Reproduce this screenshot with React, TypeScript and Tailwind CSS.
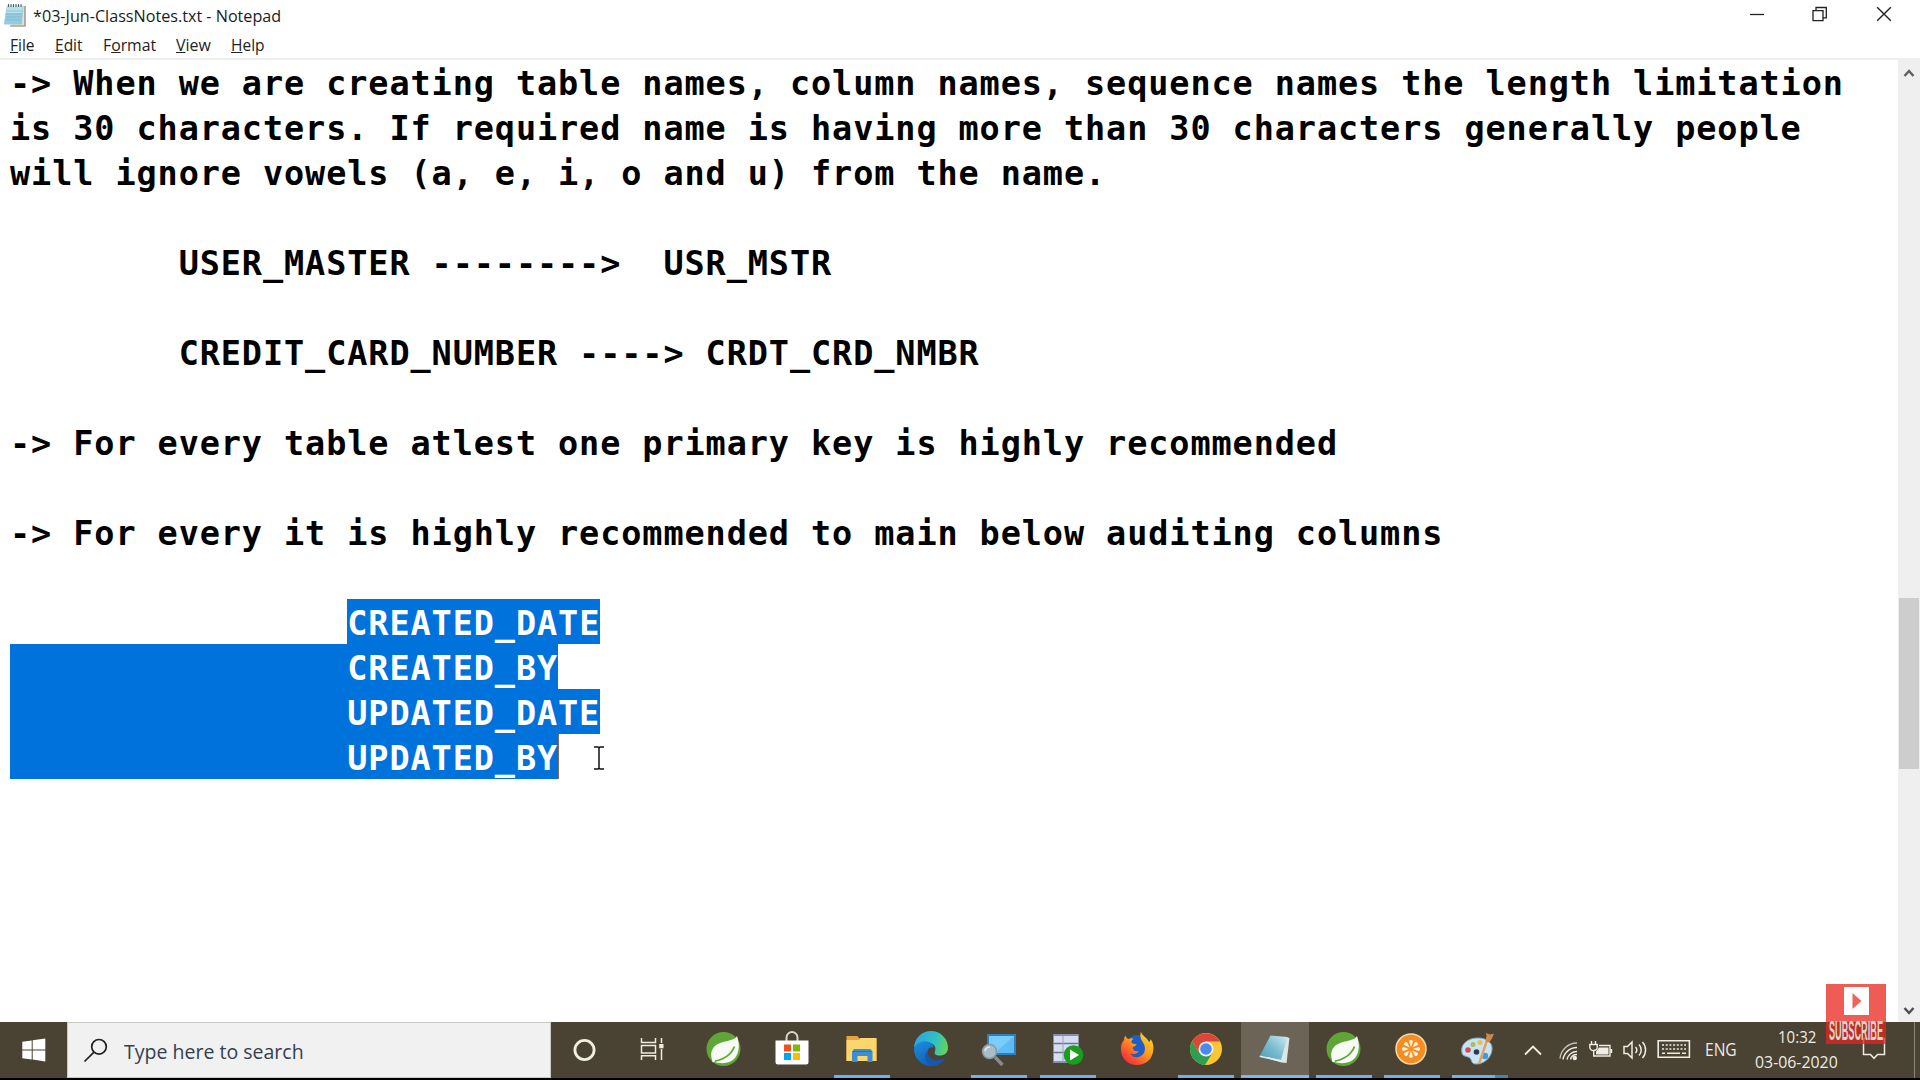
import { useLayoutEffect, useRef, useState } from "react";
import type { ReactNode } from "react";

/* Text squeezed or stretched to a given width. */
function Fit({ w, className = "", children }: { w: number; className?: string; children: ReactNode }) {
  const ref = useRef<HTMLSpanElement>(null);
  const [scale, setScale] = useState(1);
  useLayoutEffect(() => {
    if (ref.current) setScale(w / ref.current.offsetWidth);
  }, [w]);
  return (
    <span className="block shrink-0" style={{ width: w }}>
      <span
        ref={ref}
        className={"inline-block origin-left whitespace-pre " + className}
        style={{ transform: `scaleX(${scale})` }}
      >
        {children}
      </span>
    </span>
  );
}

function NotepadIcon({ className }: { className: string }) {
  return (
    <svg className={className} viewBox="0 0 24 24">
      <path d="M6 3h16.500v20.500H8z" fill="#e9e2cf" />
      <path d="M22 3v20H7" fill="none" stroke="#8a8473" strokeWidth="1.200" />
      <path d="M4 2.500h16.500L19 21.500H0.800z" fill="#93cbdf" />
      <path d="M4.500 3h15.500l-1 7H3z" fill="#b9dfeb" />
      <path d="M3 8h16M2.500 11h16M2.500 14h16M2 17h16" stroke="#79b3cb" strokeWidth=".6" />
      <path d="M5.500 1v3M8 1v3M10.500 1v3M13 1v3M15.500 1v3M18 1v3" stroke="#4c5f66" strokeWidth="1" />
    </svg>
  );
}

function TitleBar() {
  return (
    <div className="flex h-8 shrink-0 items-start bg-white">
      <NotepadIcon className="ml-[3px] mt-[3px] h-6 w-6" />
      <div className="ml-[6px] mt-[5px] text-[15.500px] leading-[22px] text-[#1c1c1c]">
        <Fit w={248}>*03-Jun-ClassNotes.txt - Notepad</Fit>
      </div>
      <div className="ml-auto flex text-[#222]">
        <svg className="mt-[6px] h-[16px] w-[16px]" viewBox="0 0 16 16"><path d="M1 8.500h14" stroke="currentColor" strokeWidth="1.300" /></svg>
        <svg className="ml-[47px] mt-[6px] h-[16px] w-[16px]" viewBox="0 0 16 16" fill="none" stroke="currentColor" strokeWidth="1.300">
          <path d="M1 4.600h10v10H1zM4 4.600V1.500h10.300v10.300H11" />
        </svg>
        <svg className="ml-[48px] mr-[28px] mt-[6px] h-[16px] w-[16px]" viewBox="0 0 16 16" stroke="currentColor" strokeWidth="1.400"><path d="M1.200 1.200l13.600 13.600M14.800 1.200L1.200 14.800" /></svg>
      </div>
    </div>
  );
}

function MenuBar() {
  return (
    <div className="flex h-[26px] shrink-0 bg-white pl-[10px] text-[15.500px] leading-[27px] text-[#222]">
      <Fit w={25}><u>F</u>ile</Fit>
      <div className="w-[20px]" />
      <Fit w={28}><u>E</u>dit</Fit>
      <div className="w-[20px]" />
      <Fit w={53}>F<u>o</u>rmat</Fit>
      <div className="w-[20px]" />
      <Fit w={35}><u>V</u>iew</Fit>
      <div className="w-[20px]" />
      <Fit w={34}><u>H</u>elp</Fit>
    </div>
  );
}

const LINES = [
  "-> When we are creating table names, column names, sequence names the length limitation",
  "is 30 characters. If required name is having more than 30 characters generally people",
  "will ignore vowels (a, e, i, o and u) from the name.",
  "",
  "        USER_MASTER -------->  USR_MSTR",
  "",
  "        CREDIT_CARD_NUMBER ----> CRDT_CRD_NMBR",
  "",
  "-> For every table atlest one primary key is highly recommended",
  "",
  "-> For every it is highly recommended to main below auditing columns",
  "",
];

const SELECTED = [
  { plain: "                ", text: "CREATED_DATE" },
  { plain: "", text: "                CREATED_BY" },
  { plain: "", text: "                UPDATED_DATE" },
  { plain: "", text: "                UPDATED_BY" },
];

function Editor() {
  return (
    <div className="flex min-h-0 flex-1 border-t-2 border-[#efefef] bg-white">
      <div className="relative flex-1 overflow-hidden pl-[10px] font-['DejaVu_Sans_Mono','Liberation_Mono',monospace] text-[33.500px] font-bold tracking-[0.910px] text-black">
        <div className="-mt-px">
          {LINES.map((l, i) => (
            <div key={i} className="h-[45px] whitespace-pre pt-[2px] leading-[45px]">{l}</div>
          ))}
          {SELECTED.map((l) => (
            <div key={l.text} className="flex h-[45px] whitespace-pre leading-[47px]">
              <span>{l.plain}</span>
              <span className="h-[45px] bg-[#0072dc] pt-px text-white">{l.text}</span>
            </div>
          ))}
        </div>
        <svg className="absolute left-[593px] top-[685px] h-[26px] w-[12px]" viewBox="0 0 12 26" fill="none" stroke="#111" strokeWidth="1.500">
          <path d="M1 2h4l1 1 1-1h4M6 3v20M1 24h4l1-1 1 1h4" />
        </svg>
        <div className="absolute left-[558px] top-[674px] h-[45px] w-px bg-[#8a6a50]" />
      </div>
      <div className="flex w-[22px] flex-col items-center bg-[#efefef]">
        <svg className="mt-[7px] h-[12px] w-[12px]" viewBox="0 0 12 12" fill="none" stroke="#606060" strokeWidth="2.500"><path d="M1.500 9L6 4l4.500 5" /></svg>
        <div className="mt-[519px] h-[171px] w-[20px] bg-[#cdcdcd]" />
        <svg className="mb-[5px] mt-auto h-[12px] w-[12px]" viewBox="0 0 12 12" fill="none" stroke="#505050" strokeWidth="2.500"><path d="M1.500 3L6 8l4.500-5" /></svg>
      </div>
    </div>
  );
}

function Spring() {
  return (
    <svg className="h-[36px] w-[36px]" viewBox="0 0 36 36">
      <circle cx="17.500" cy="18" r="17" fill="#5fa636" />
      <path d="M31 5C28 11 14 9 8 16c-4 5-3 10-1.500 14C14 33.500 24 33 29 27c5-6 4.500-15 2-22z" fill="#f7fbf4" />
      <path d="M6.500 30.500C17 29 25 24 28.500 15.500" fill="none" stroke="#5fa636" strokeWidth="1.800" />
      <circle cx="7.500" cy="29.500" r="1.500" fill="#fff" />
    </svg>
  );
}

function Store() {
  return (
    <svg className="h-[36px] w-[36px]" viewBox="0 0 36 36">
      <path d="M12.500 10V6.500a5.500 5.500 0 0111 0V10" fill="none" stroke="#d8d6cc" strokeWidth="2" />
      <path d="M1.500 9.500h33V31a2.500 2.500 0 01-2.500 2.500H4A2.500 2.500 0 011.500 31z" fill="#fff" />
      <path d="M10 13.500h7v7h-7z" fill="#f25022" />
      <path d="M19 13.500h7v7h-7z" fill="#7fba00" />
      <path d="M10 22h7v7h-7z" fill="#00a4ef" />
      <path d="M19 22h7v7h-7z" fill="#ffb900" />
    </svg>
  );
}

function Explorer() {
  return (
    <svg className="h-[36px] w-[36px]" viewBox="0 0 36 36">
      <path d="M2.500 5h11l2 2.500h17V30h-30z" fill="#e8a33b" />
      <path d="M2.500 9h12l2-2h16v23h-30z" fill="#fbd56e" />
      <path d="M8 31V20.500L10 18h16.500l2 2.500V31h-5v-6h-10v6z" fill="#3e8ed0" />
      <path d="M9 20.500h18.500" stroke="#2d6fae" strokeWidth="1" />
    </svg>
  );
}

function Edge() {
  return (
    <svg className="h-[36px] w-[36px]" viewBox="0 0 36 36">
      <defs>
        <linearGradient id="edgeTop" x1="0" x2="1" y1=".3" y2=".5"><stop offset="0" stopColor="#2aa5dc" /><stop offset=".6" stopColor="#2fc0c8" /><stop offset="1" stopColor="#62d35c" /></linearGradient>
        <linearGradient id="edgeLow" x1="0" x2=".6" y1="0" y2="1"><stop offset="0" stopColor="#1d8fdd" /><stop offset="1" stopColor="#0f5cb5" /></linearGradient>
      </defs>
      <path d="M1 17A17 17 0 0135 17c0 5-4 7.500-8 7.500-5 0-6-2-5-4 2-6-3-9-8-9C7 11.500 2 15 1 17z" fill="url(#edgeTop)" />
      <path d="M1 18C3 12 9 9.500 14 10.500c5 .8 7 4.500 6.500 6.500-1.500-1.500-5-1-6 3-1 5 4 9.500 10 9.500 3 0 5.500-1 7.500-2.500C29 32 24 35 18 35A17 17 0 011 18z" fill="url(#edgeLow)" />
      <path d="M14.500 20c-1 5 4 9.500 10 9.500 3 0 5.500-1 7.500-2.500-2 4-6 7-11 8-7-1-12-9-6.500-15z" fill="#1659ac" />
    </svg>
  );
}

function RemoteScreen() {
  return (
    <svg className="h-[36px] w-[36px]" viewBox="0 0 36 36">
      <path d="M6 3h29v21H6z" fill="#2f7fb8" />
      <path d="M8 5h25v17H8z" fill="#5dbcf8" />
      <path d="M8 5h25L14 22H8z" fill="#7accfb" />
      <path d="M14 26l7.500 8" stroke="#8a8a86" strokeWidth="3.500" />
      <circle cx="8.500" cy="20.500" r="7" fill="#a9bdc9" stroke="#8d979c" strokeWidth="1.500" />
      <path d="M4 20a5 5 0 015-4" fill="none" stroke="#dfe9ee" strokeWidth="1.500" />
    </svg>
  );
}

function ServerRun() {
  return (
    <svg className="h-[36px] w-[36px]" viewBox="0 0 36 36">
      <path d="M3.500 3h25v29h-25z" fill="#d6dcf2" />
      <path d="M3.500 4h25M3.500 12.500h25M3.500 21.500h25M3.500 31h25" stroke="#6f7390" strokeWidth="1.500" />
      <path d="M13 5v26" stroke="#9ba1c4" strokeWidth="1" />
      <circle cx="23.500" cy="24" r="9.800" fill="#18a01c" />
      <path d="M20 18.500l9 5.500-9 5.500z" fill="#fff" />
    </svg>
  );
}

function Firefox() {
  return (
    <svg className="h-[36px] w-[36px]" viewBox="0 0 36 36">
      <defs>
        <linearGradient id="fox" x1=".9" x2=".1" y1="0" y2="1"><stop offset="0" stopColor="#ffe226" /><stop offset=".45" stopColor="#ff9a1f" /><stop offset=".8" stopColor="#fb4434" /><stop offset="1" stopColor="#e82650" /></linearGradient>
      </defs>
      <circle cx="18" cy="15" r="11" fill="#1d5fc4" />
      <path d="M22 1c1 4 6 5 8 10 1.500-1 1.500-2 1.500-3 3 4 3.500 8 2.500 13-1.500 8-8 13-16 13C9 34 3 28 2 20c-.5-5 .5-8 3-11 0-1.500.3-3 1.500-4.500.5 2 1.500 3 3 3.500 2-1 4-1 5 0-1.500.8-2.500 2-2 3.500.5 1 3 1.500 5 1.500-.2 2-2.500 2.500-4 3.500.5 3 3 4.500 6.500 3.500-3 4-7 3.500-9 2 2 4 6 5 10 3.500 6-2.500 6-10 3-14-2-3-3.500-6-2-11z" fill="url(#fox)" />
    </svg>
  );
}

function Chrome() {
  return (
    <svg className="h-[36px] w-[36px]" viewBox="0 0 36 36">
      <circle cx="18" cy="18" r="16" fill="#fbc634" />
      <path d="M4.140 10A16 16 0 0017 34l7.500-12L18 18 11 21.500z" fill="#2f9e52" />
      <path d="M4.140 10A16 16 0 0131.860 10.500H18l-7 11z" fill="#dc4638" />
      <circle cx="18" cy="18" r="7.500" fill="#f2efe8" />
      <circle cx="18" cy="18" r="5.800" fill="#4a8af0" />
    </svg>
  );
}

function Citrus() {
  return (
    <svg className="h-[36px] w-[36px]" viewBox="0 0 36 36">
      <circle cx="17" cy="18" r="15" fill="#f68d22" stroke="#fbd9a8" strokeWidth="1.500" />
      <g fill="#fff3df">
        {[0, 45, 90, 135, 180, 225, 270, 315].map((a) => (
          <path key={a} d="M17 16l-2-5.500a2.100 2.100 0 014 0z" transform={`rotate(${a} 17 18)`} />
        ))}
      </g>
    </svg>
  );
}

function Palette() {
  return (
    <svg className="-ml-[6px] h-[36px] w-[36px]" viewBox="0 0 36 36">
      <path d="M3 22C1 13 9 7 19 7c9 0 15 5 14 12-1 8-8 14-16 14-5 0-4-4-6-6-2.500-2-7-1-8-5z" fill="#c9e3f1" stroke="#78afcf" strokeWidth="1" />
      <circle cx="9" cy="19" r="2.800" fill="#d9485a" />
      <circle cx="14" cy="13.500" r="2.500" fill="#a8bf58" />
      <circle cx="21" cy="11.500" r="2.500" fill="#e8c04a" />
      <circle cx="17.500" cy="21" r="2.800" fill="#2b3a4c" />
      <circle cx="26" cy="25" r="3.200" fill="#3f9bdc" />
      <path d="M28.500 8L20 33" stroke="#dba468" strokeWidth="2.500" />
      <path d="M26.500 10.500L27.500 5l-.5-3 4 1.500 4-1-2 5-3 4z" fill="#c98a52" />
    </svg>
  );
}

function TaskButton({ gap, bar = "on", children }: { gap: string; bar?: "on" | "off" | "group"; children: ReactNode }) {
  return (
    <div className={"flex h-full w-[56px] shrink-0 flex-col items-center " + gap}>
      <div className="mt-[9px] h-[36px]">{children}</div>
      {bar !== "off" && (
        <div className="mt-auto flex h-[3px] w-full">
          <div className="flex-1 bg-[#6fb0ee]" />
          {bar === "group" && <div className="w-[13px] bg-[#4b81b4]" />}
        </div>
      )}
    </div>
  );
}

function Tray() {
  return (
    <div className="ml-[16px] flex h-full items-start text-[#eeece4]">
      <svg className="mt-[22px] h-[12px] w-[18px]" viewBox="0 0 18 12" fill="none" stroke="currentColor" strokeWidth="1.800"><path d="M1 10.500L9 2.500l8 8" /></svg>
      <svg className="ml-[17px] mt-[19px] h-[20px] w-[20px]" viewBox="0 0 20 20" fill="none" stroke="currentColor" strokeWidth="1.400">
        <path d="M1 17.500A17 17 0 0118 2" opacity=".75" />
        <path d="M4 18.500A14 14 0 0118 6.500M8 18.500A10 10 0 0118 10.500M11.500 18.500a6.500 6.500 0 016.500-5" />
        <circle cx="15.800" cy="17" r="2.200" fill="currentColor" stroke="none" />
      </svg>
      <svg className="ml-[10px] mt-[17px] h-[20px] w-[24px]" viewBox="0 0 24 20" fill="none" stroke="currentColor" strokeWidth="1.400">
        <path d="M2.500 2v3M6.500 2v3M.8 5.500h7.500v2.500a3.500 3.500 0 01-3.500 3.500 3.500 3.500 0 01-4-3.500zM4.700 11.500V17H21V6.500H10M22.500 10v4" />
        <path d="M10 8.500h9.500v7H7v-3z" fill="currentColor" stroke="none" />
      </svg>
      <svg className="ml-[10px] mt-[17px] h-[22px] w-[24px]" viewBox="0 0 24 22" fill="none" stroke="currentColor" strokeWidth="1.500">
        <path d="M1 7.500h3.500L9 3v16l-4.500-4.500H1z" />
        <path d="M12.500 8a4.500 4.500 0 010 6M16 5.500a8 8 0 010 11M19.500 3a12 12 0 010 16" />
      </svg>
      <svg className="ml-[10px] mt-[17px] h-[20px] w-[34px]" viewBox="0 0 34 20" fill="none" stroke="currentColor" strokeWidth="1.600">
        <path d="M1.200 1.800h31.200v16.400H1.200z" />
        <path d="M5 6h24M5 10h24" strokeDasharray="2 1.700" />
        <path d="M5 14.200h3M10 14.200h13M25 14.200h4" />
      </svg>
      <div className="ml-[14px] mt-[14px] text-[18px] leading-[26px]"><Fit w={32}>ENG</Fit></div>
      <div className="ml-[18px] flex w-[83px] flex-col items-center text-[17px]">
        <div className="mt-[2px] leading-[25px]"><Fit w={38}>10:32</Fit></div>
        <div className="leading-[25px]"><Fit w={83}>03-06-2020</Fit></div>
      </div>
      <svg className="ml-[24px] mt-[15px] h-[24px] w-[24px]" viewBox="0 0 24 24" fill="none" stroke="currentColor" strokeWidth="1.500"><path d="M1.500 1.500h21v16h-7l-3.500 3.800-3.500-3.800h-7z" /></svg>
    </div>
  );
}

function Taskbar() {
  return (
    <div className="flex h-[56px] shrink-0 bg-[#4a4232]">
      <div className="flex w-[67px] shrink-0 pl-[22px] pt-[16px]">
        <svg className="h-[24px] w-[24px]" viewBox="0 0 24 24" fill="#fff"><path d="M.3 3.800L9.700 2.400v9H.3zM10.700 2.200L23.300.4v11H10.700zM.3 12.400h9.400v9L.3 20.200zM10.700 12.400h12.600v11L10.700 21.600z" /></svg>
      </div>
      <div className="flex w-[484px] shrink-0 border border-[#c9c9c4] bg-[#f1f1f1]">
        <svg className="ml-[15px] mt-[15px] h-[25px] w-[25px]" viewBox="0 0 25 25" fill="none" stroke="#222" strokeWidth="1.700"><circle cx="16" cy="8.800" r="7.300" /><path d="M11 14.200L1.500 23.500" /></svg>
        <div className="ml-[16px] mt-[13px] text-[20.500px] leading-[30px] text-[#33404f]"><Fit w={180}>Type here to search</Fit></div>
      </div>
      <svg className="ml-[22px] mt-[16px] h-[24px] w-[24px] shrink-0" viewBox="0 0 24 24" fill="none" stroke="#f3efdf" strokeWidth="2.800"><circle cx="11.500" cy="12" r="9.600" /></svg>
      <svg className="ml-[43px] mt-[15px] h-[24px] w-[24px] shrink-0" viewBox="0 0 24 24" fill="none" stroke="#efece2" strokeWidth="1.500">
        <path d="M1.500 1v4.500h14V1M1.500 8.500h14v7.500h-14zM1.500 23v-4.200h14V23M21.500 1v5M21.500 12v11" />
        <path d="M19.200 7h4.300v4.300h-4.300z" fill="#efece2" stroke="none" />
      </svg>
      <TaskButton gap="ml-[32px]" bar="off"><Spring /></TaskButton>
      <TaskButton gap="ml-[12px]" bar="off"><Store /></TaskButton>
      <TaskButton gap="ml-[14px]"><Explorer /></TaskButton>
      <TaskButton gap="ml-[13px]" bar="off"><Edge /></TaskButton>
      <TaskButton gap="ml-[12px]"><RemoteScreen /></TaskButton>
      <TaskButton gap="ml-[13px]"><ServerRun /></TaskButton>
      <TaskButton gap="ml-[13px]" bar="off"><Firefox /></TaskButton>
      <TaskButton gap="ml-[13px]"><Chrome /></TaskButton>
      <div className="ml-[7px] flex h-full w-[68px] shrink-0 flex-col items-center bg-[#6c6557]">
        <svg className="mt-[10px] h-[36px] w-[36px]" viewBox="0 0 36 36">
          <defs>
            <linearGradient id="pad" x1="1" x2="0" y1="0" y2="1"><stop offset="0" stopColor="#cfeaf0" /><stop offset=".5" stopColor="#7dbdd2" /><stop offset="1" stopColor="#4a9cb8" /></linearGradient>
          </defs>
          <path d="M29 5l3.500 1-3 25-5-.5-15-4.500z" fill="#dde6e4" />
          <path d="M13.500 3.500L30.500 5 24 28 3 23.500z" fill="url(#pad)" />
          <path d="M3 23.500L24 28l-.6 1.800L2.500 25z" fill="#d8eef2" />
        </svg>
        <div className="mt-auto h-[3px] w-full bg-[#7ab8f2]" />
      </div>
      <TaskButton gap="ml-[7px]"><Spring /></TaskButton>
      <TaskButton gap="ml-[12px]"><Citrus /></TaskButton>
      <TaskButton gap="ml-[12px]" bar="group"><Palette /></TaskButton>
      <Tray />
      <div className="ml-auto mr-[5px] h-full w-px bg-[#8a857a]" />
    </div>
  );
}

function Subscribe() {
  return (
    <div className="absolute left-[1826px] top-[984px] flex h-[60px] w-[60px] flex-col items-center bg-[#e8261c]/75">
      <svg className="mt-[3px] h-[28px] w-[25px]" viewBox="0 0 25 28"><path d="M0 0h25v28H0z" fill="#fff" /><path d="M8.500 6v16l9-8z" fill="#f0625a" /></svg>
      <div className="mt-[4px] text-[27px] leading-[24px] font-bold text-[#d9d4cf] font-['Liberation_Sans',sans-serif]"><Fit w={54}>SUBSCRIBE</Fit></div>
    </div>
  );
}

export default function App() {
  return (
    <div className="relative flex h-[1080px] w-[1920px] flex-col overflow-hidden bg-black font-['Open_Sans','Noto_Sans',sans-serif]">
      <TitleBar />
      <MenuBar />
      <Editor />
      <Taskbar />
      <div className="h-[2px] shrink-0 bg-black" />
      <Subscribe />
    </div>
  );
}
